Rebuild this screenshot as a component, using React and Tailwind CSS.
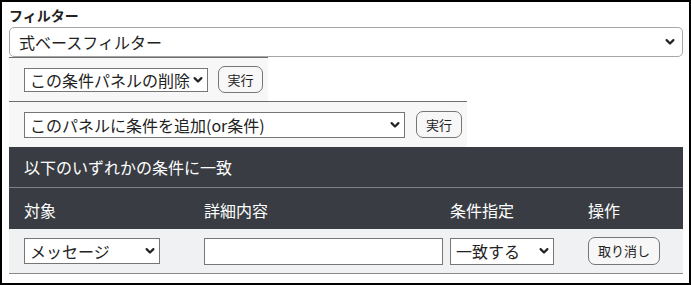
import { useState } from "react";

const Chevron = ({ right = "right-[7px]" }) => (
  <svg
    width="10"
    height="7"
    viewBox="0 0 10 7"
    className={`pointer-events-none absolute top-1/2 -translate-y-1/2 ${right}`}
  >
    <path
      d="M1.6 1.6 L5 5 L8.4 1.6"
      fill="none"
      stroke="#222"
      strokeWidth="2.2"
      strokeLinecap="round"
      strokeLinejoin="round"
    />
  </svg>
);

function SmallSelect({ value, width, height = "h-[25px]" }) {
  return (
    <div className={`relative ${width} ${height}`}>
      <select
        defaultValue={value}
        className="h-full w-full appearance-none border border-[#767676] bg-white pl-[5px] pr-[8px] text-[16px] leading-[20px] text-[#222] outline-none"
      >
        <option>{value}</option>
      </select>
      <Chevron right="right-[5px]" />
    </div>
  );
}

function Btn({ children, width }) {
  return (
    <button className={`${width} h-[27px] rounded-[7px] border border-[#767676] bg-[#f7f7f7] text-[13px] leading-[18px] text-[#222]`}>
      {children}
    </button>
  );
}

export default function App() {
  const [detail, setDetail] = useState("");

  return (
    <div className="h-[285px] w-[691px] border-2 border-black bg-white pl-[7px] pr-[6px] font-['Noto_Sans_CJK_JP',sans-serif] text-[#212529]">
      <div className="pt-[3px] text-[14px] font-bold leading-[20px] text-[#222]">フィルター</div>

      {/* main filter select */}
      <div className="relative mt-[2px] h-[30px] w-full">
        <select
          defaultValue="式ベースフィルター"
          className="h-full w-full appearance-none rounded-[5px] border border-[#a6a6a6] bg-white pl-[9px] pr-[24px] text-[16px] leading-[20px] text-[#222] outline-none"
        >
          <option>式ベースフィルター</option>
        </select>
        <Chevron right="right-[8px]" />
      </div>

      {/* panel actions */}
      <div className="flex h-[44px] w-fit items-center gap-[10px] border-t border-[#6e6e6e] bg-[#f7f7f7] pl-[15px] pr-[5px]">
        <SmallSelect value="この条件パネルの削除" width="w-[184px]" height="h-[24px]" />
        <Btn width="w-[45px]">実行</Btn>
      </div>
      <div className="flex h-[46px] w-fit items-center gap-[11px] border-t border-[#6e6e6e] bg-[#f7f7f7] pl-[15px] pr-[5px]">
        <SmallSelect value="このパネルに条件を追加(or条件)" width="w-[381px]" height="h-[26px]" />
        <Btn width="w-[46px]">実行</Btn>
      </div>

      {/* condition table */}
      <div className="bg-[#393d43] text-[16px] leading-[22px] text-white">
        <div className="flex h-[41px] items-center border-b border-[#7d8085] pl-[15px]">
          以下のいずれかの条件に一致
        </div>
        <div className="grid h-[41px] grid-cols-[180px_246px_138px_1fr] items-center pl-[15px] pt-[2px]">
          <div>対象</div>
          <div>詳細内容</div>
          <div>条件指定</div>
          <div>操作</div>
        </div>
      </div>
      <div className="grid h-[45px] grid-cols-[180px_246px_138px_1fr] items-center border-b border-[#8a8a8a] bg-[#f0f1f3] pl-[15px]">
        <SmallSelect value="メッセージ" width="w-[136px]" height="h-[26px]" />
        <input
          value={detail}
          onChange={(e) => setDetail(e.target.value)}
          className="h-[27px] w-[239px] border border-[#767676] bg-white px-[4px] text-[16px] outline-none"
        />
        <SmallSelect value="一致する" width="w-[104px]" height="h-[27px]" />
        <Btn width="w-[72px] !h-[28px]">取り消し</Btn>
      </div>
    </div>
  );
}
